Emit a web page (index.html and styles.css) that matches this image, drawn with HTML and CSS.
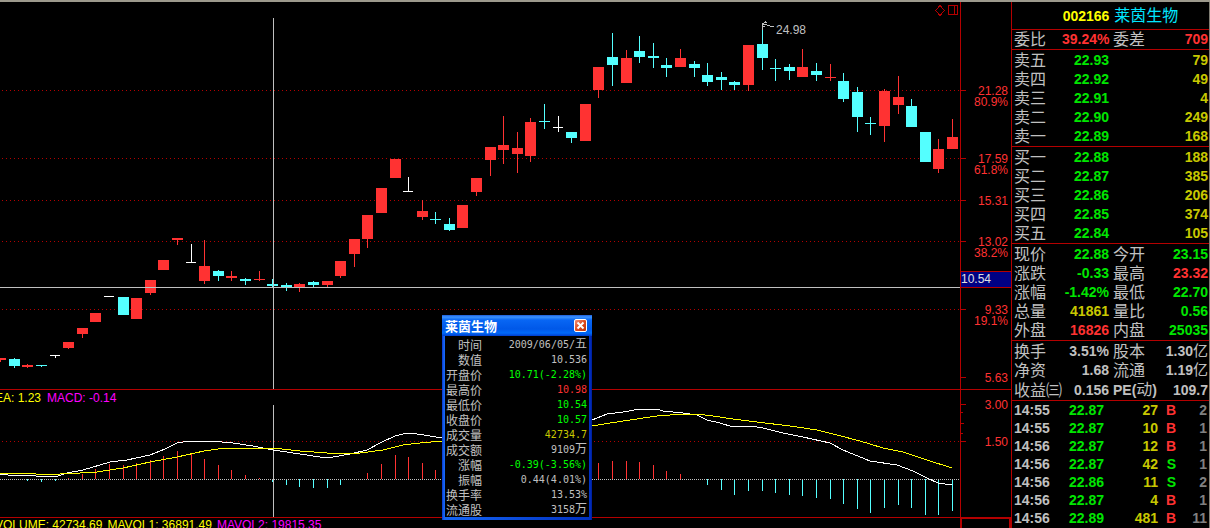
FILE: index.html
```html
<!DOCTYPE html>
<html lang="zh-CN">
<head>
<meta charset="utf-8">
<title>莱茵生物 002166</title>
<link rel="stylesheet" href="styles.css">
</head>
<body>
<main class="terminal">
  <div class="charts">
    <section class="pane">
      <div class="plot">
        <svg class="price-plot" id="price" viewBox="0 2 960 387" preserveAspectRatio="none" shape-rendering="crispEdges">
          <path class="grid" d="M2 90.5H960M2 158.5H960M2 200.5H960M2 241.5H960M2 309.5H960"/>
          <g id="candles"></g>
          <path class="cross" d="M273.5 18V389M0 287.5H960"/>
          <path class="pointer" d="M762.5 30V23.5M762 23.5h2M764 22.5h3M765 21.5h1M763 24.5h4M767 25.5h3M770 26.5h4M763 26.5h2"/>
        </svg>
        <span class="peak">24.98</span>
        <svg class="tools" viewBox="0 0 24 12" shape-rendering="crispEdges">
          <path d="M5 .5L9.5 5.5L5 10.5L.5 5.5Z"/>
          <path d="M13.5 .5H22.5V9.5H13.5ZM19.5 .5V9.5"/>
        </svg>
      </div>
      <svg class="axis price-axis" viewBox="961 2 50 387">
        <path class="tick" d="M961 90.5h5M961 158.5h5M961 200.5h5M961 241.5h5M961 309.5h5M961 377.5h5"/>
        <text x="1008" y="95">21.28</text><text x="1008" y="106">80.9%</text>
        <text x="1008" y="163">17.59</text><text x="1008" y="174">61.8%</text>
        <text x="1008" y="205">15.31</text>
        <text x="1008" y="246">13.02</text><text x="1008" y="257">38.2%</text>
        <text x="1008" y="314">9.33</text><text x="1008" y="325">19.1%</text>
        <text x="1008" y="382">5.63</text>
        <rect class="cursor-box" x="960.5" y="271.5" width="51" height="16"/>
        <text class="cursor-text" x="961" y="283">10.54</text>
      </svg>
    </section>
    <section class="pane">
      <div class="plot">
        <svg class="macd-plot" viewBox="0 390 960 127" preserveAspectRatio="none" shape-rendering="crispEdges">
          <path class="grid" d="M2 441.5H960"/>
          <g id="bars"></g>
          <path class="zero" d="M0 479.5H960"/>
          <path class="cross" d="M273.5 405V517"/>
          <polyline class="dif" points="0,474 8,475 35,475 36,476 58,476 67,473 83,470 110,462 127,460 150,455 165,449 177,443 190,441 210,441 233,443 253,446 273,450 300,454 320,457 333,457 350,454 367,450 380,443 395,436 407,433 417,434 430,436 442,438 500,446 550,438 592,420 607,414 623,412 640,409 657,409 663,411 683,413 697,415 707,420 720,423 733,427 750,426 763,428 783,433 803,437 830,443 843,450 870,461 897,465 913,471 927,478 938,483 952,485"/>
          <polyline class="dea" points="0,473 34,473 36,474 60,474 80,473 97,472 123,468 150,462 177,457 204,451 225,448 260,448 273,448 300,451 327,453 347,453 360,453 383,450 403,445 420,443 442,441 500,442 550,438 592,426 610,423 630,420 657,416 683,414 697,414 713,416 733,419 757,422 790,426 817,430 833,434 860,441 883,448 903,452 927,460 952,468"/>
        </svg>
        <p class="legend"><span class="yellow">EA: 1.23</span><span class="magenta">MACD: -0.14</span></p>
      </div>
      <svg class="axis macd-axis" viewBox="961 390 50 127">
        <path class="tick" d="M961 404.5h5M961 412.5h2M961 423.5h3M961 433.5h2M961 441.5h5"/>
        <text x="1008" y="409">3.00</text><text x="1008" y="446">1.50</text>
      </svg>
    </section>
    <section class="pane volume">
      <p class="legend-row"><span class="yellow">VOLUME: 42734.69</span><span class="yellow">MAVOL1: 36891.49</span><span class="magenta">MAVOL2: 19815.35</span></p>
      <div class="volume-axis"></div>
    </section>

    <section class="popup" role="dialog" aria-labelledby="popup-title">
      <header class="popup-bar">
        <h2 id="popup-title">莱茵生物</h2>
        <button class="close" type="button" aria-label="关闭"><svg viewBox="0 0 9 9"><path d="M1.5 1.5L7.5 7.5M7.5 1.5L1.5 7.5"/></svg></button>
      </header>
      <div class="popup-body">
        <table class="detail">
          <tr><th>时间</th><td>2009/06/05/<span class="han">五</span></td></tr>
          <tr><th>数值</th><td>10.536</td></tr>
          <tr><th>开盘价</th><td class="lime">10.71(-2.28%)</td></tr>
          <tr><th>最高价</th><td class="red">10.98</td></tr>
          <tr><th>最低价</th><td class="lime">10.54</td></tr>
          <tr><th>收盘价</th><td class="lime">10.57</td></tr>
          <tr><th>成交量</th><td class="gold">42734.7</td></tr>
          <tr><th>成交额</th><td>9109<span class="han">万</span></td></tr>
          <tr><th>涨幅</th><td class="lime">-0.39(-3.56%)</td></tr>
          <tr><th>振幅</th><td>0.44(4.01%)</td></tr>
          <tr><th>换手率</th><td>13.53%</td></tr>
          <tr><th>流通股</th><td>3158<span class="han">万</span></td></tr>
        </table>
      </div>
    </section>
  </div>

  <aside class="quote">
    <h1 class="stock"><span class="code">002166</span><span class="name">莱茵生物</span></h1>
    <table class="figures ratio">
      <tr><th>委比</th><td class="red">39.24%</td><th>委差</th><td class="red">709</td></tr>
    </table>
    <table class="figures">
      <tr><th>卖五</th><td class="green">22.93</td><th></th><td class="gold">79</td></tr>
      <tr><th>卖四</th><td class="green">22.92</td><th></th><td class="gold">49</td></tr>
      <tr><th>卖三</th><td class="green">22.91</td><th></th><td class="gold">4</td></tr>
      <tr><th>卖二</th><td class="green">22.90</td><th></th><td class="gold">249</td></tr>
      <tr><th>卖一</th><td class="green">22.89</td><th></th><td class="gold">168</td></tr>
    </table>
    <table class="figures">
      <tr><th>买一</th><td class="green">22.88</td><th></th><td class="gold">188</td></tr>
      <tr><th>买二</th><td class="green">22.87</td><th></th><td class="gold">385</td></tr>
      <tr><th>买三</th><td class="green">22.86</td><th></th><td class="gold">206</td></tr>
      <tr><th>买四</th><td class="green">22.85</td><th></th><td class="gold">374</td></tr>
      <tr><th>买五</th><td class="green">22.84</td><th></th><td class="gold">105</td></tr>
    </table>
    <table class="figures">
      <tr><th>现价</th><td class="green">22.88</td><th>今开</th><td class="green">23.15</td></tr>
      <tr><th>涨跌</th><td class="green">-0.33</td><th>最高</th><td class="red">23.32</td></tr>
      <tr><th>涨幅</th><td class="green">-1.42%</td><th>最低</th><td class="green">22.70</td></tr>
      <tr><th>总量</th><td class="gold">41861</td><th>量比</th><td class="green">0.56</td></tr>
      <tr><th>外盘</th><td class="red">16826</td><th>内盘</th><td class="green">25035</td></tr>
    </table>
    <table class="figures">
      <tr><th>换手</th><td>3.51%</td><th>股本</th><td>1.30<span class="unit">亿</span></td></tr>
      <tr><th>净资</th><td>1.68</td><th>流通</th><td>1.19<span class="unit">亿</span></td></tr>
      <tr><th>收益㈢</th><td>0.156</td><th><span class="pe">PE(</span>动<span class="pe">)</span></th><td>109.7</td></tr>
    </table>
    <table class="trades">
      <tr><td>14:55</td><td class="green">22.87</td><td class="gold">27</td><td class="red">B</td><td>2</td></tr>
      <tr><td>14:55</td><td class="green">22.87</td><td class="gold">10</td><td class="red">B</td><td>1</td></tr>
      <tr><td>14:56</td><td class="green">22.87</td><td class="gold">12</td><td class="red">B</td><td>1</td></tr>
      <tr><td>14:56</td><td class="green">22.87</td><td class="gold">42</td><td class="green">S</td><td>1</td></tr>
      <tr><td>14:56</td><td class="green">22.86</td><td class="gold">11</td><td class="green">S</td><td>2</td></tr>
      <tr><td>14:56</td><td class="green">22.87</td><td class="gold">4</td><td class="red">B</td><td>1</td></tr>
      <tr><td>14:56</td><td class="green">22.89</td><td class="gold">481</td><td class="red">B</td><td>11</td></tr>
    </table>
  </aside>
</main>
<script src="chart.js"></script>
</body>
</html>
```
FILE: styles.css
```css
* { box-sizing: border-box; }

body {
  margin: 0;
  background: #000;
  color: #c0c0c0;
  font: 12px/14px "Liberation Sans", "Noto Sans CJK SC", sans-serif;
}

h1, h2, p { margin: 0; }
table { border-collapse: collapse; border-spacing: 0; }
th, td { padding: 0; font-weight: inherit; white-space: nowrap; }
svg { display: block; }

.red { color: #ff3232; }
.green { color: #00e600; }
.lime { color: #00ff00; }
.gold { color: #c8c800; }
.yellow { color: #ffff00; }
.magenta { color: #ff00ff; }

.terminal {
  display: flex;
  height: 100vh;
  overflow: hidden;
  border-top: 2px solid #9c998c;
}

/* Charts */
.charts {
  position: relative;
  display: flex;
  flex: 1;
  flex-direction: column;
  min-width: 0;
}
.pane { display: flex; border-bottom: 1px solid #b40000; }
.plot { position: relative; flex: 1; min-width: 0; }
.plot > svg:first-child { width: 100%; }
.price-plot, .price-axis { height: 387px; }
.macd-plot, .macd-axis { height: 127px; }
.axis {
  flex: none;
  width: 51px;
  border-left: 1px solid #b40000;
}
.axis text { fill: #ff3232; text-anchor: end; }
.tick { fill: none; stroke: #b40000; shape-rendering: crispEdges; }
.axis .cursor-text { fill: #e0e0e0; text-anchor: start; }
.cursor-box { fill: #000084; stroke: #b40000; shape-rendering: crispEdges; }

.grid { fill: none; stroke: #b40000; stroke-dasharray: 1 3; }
.zero { fill: none; stroke: #c0c0c0; stroke-dasharray: 1 1; }
.cross, .pointer { fill: none; stroke: #c0c0c0; }
.dif, .dea { fill: none; stroke: #fff; }
.dea { stroke: #ffff00; }
.up { fill: #ff3232; }
.down { fill: #54ffff; }
.flat { fill: #fff; }

.peak { position: absolute; top: 21px; right: 154px; }
.tools {
  position: absolute;
  top: 3px;
  right: 1px;
  width: 24px;
  height: 12px;
  fill: none;
  stroke: #b40000;
}
.legend { position: absolute; top: 1px; left: -5px; display: flex; gap: 6px; }

.volume { flex: 1; border-bottom: 0; min-height: 0; overflow: hidden; }
.legend-row {
  display: flex;
  flex: 1;
  gap: 5px;
  margin-left: -5px;
}
.volume-axis {
  width: 51px;
  border: 2px solid #b40000;
  border-width: 1px 2px 0;
}

/* Detail window */
.popup {
  position: absolute;
  top: 313px;
  left: 442px;
  width: 150px;
  padding: 0 3px 3px;
  background: linear-gradient(90deg, #0a34c8, #1666f4 2px, #1666f4 3px, #0030c0 148px, #001c98);
}
.popup-bar {
  display: flex;
  align-items: center;
  justify-content: space-between;
  height: 21px;
  margin: 0 -3px;
  padding: 0 5px 0 3px;
  background: linear-gradient(#1c5cd8, #3c94ff 2px, #0866f4 5px, #0058e8 14px, #006af8 18px, #003ccc);
}
.popup-bar h2 {
  color: #fff;
  font: bold 13px/20px "Noto Sans CJK SC", sans-serif;
}
.close {
  width: 13px;
  height: 13px;
  padding: 1px;
  border: 1px solid #fff;
  border-radius: 2px;
  background: linear-gradient(135deg, #f09078, #e04c20 50%, #c03408);
}
.close svg { width: 9px; height: 9px; fill: none; stroke: #fff; stroke-width: 2; }
.popup-body { padding-top: 1px; background: #000; }
.detail { width: 100%; }
.detail tr { height: 15px; }
.detail th {
  width: 37px;
  text-align: right;
  font: 12px/15px "Noto Sans CJK SC", sans-serif;
}
.detail td {
  padding-right: 2px;
  text-align: right;
  font: 10px/15px "DejaVu Sans Mono", "Noto Sans CJK SC", monospace;
}
.detail .han { font: 12px/12px "Noto Sans CJK SC", sans-serif; }

/* Quote panel */
.quote {
  flex: none;
  width: 199px;
  border-right: 1px solid #807e74;
  border-left: 1px solid #b40000;
  font-size: 14px;
  font-weight: bold;
}
.stock {
  display: flex;
  align-items: center;
  justify-content: center;
  gap: 5px;
  height: 27px;
  padding-left: 20px;
  font-size: 14px;
}
.code { color: #ffff00; }
.name { color: #00e6ff; font-size: 16px; font-weight: 400; }
.figures {
  width: 100%;
  table-layout: fixed;
  border-top: 1px solid #b40000;
  border-collapse: separate;
  padding: 1px 1px 0 2px;
}
.ratio { padding-top: 0; }
.figures tr { height: 19px; }
.figures th {
  width: 48px;
  text-align: left;
  font-size: 16px;
  font-weight: 400;
  line-height: 19px;
}
.figures th:nth-child(3) { padding-left: 1px; }
.figures td { text-align: right; line-height: 19px; }
.figures td:nth-child(2) { width: 50px; padding-right: 3px; }
.pe { font-size: 14px; font-weight: bold; }
.unit { font-size: 15px; font-weight: 400; line-height: 15px; }
.trades {
  width: 100%;
  table-layout: fixed;
  border-top: 1px solid #b40000;
  border-collapse: separate;
  padding: 0 2px;
}
.trades td { height: 18px; text-align: right; line-height: 18px; }
.trades td:nth-child(1) { width: 40px; text-align: left; }
.trades td:nth-child(2) { width: 50px; }
.trades td:nth-child(3) { width: 54px; }
.trades td:nth-child(4) { width: 18px; }
.trades td:nth-child(5) { color: #808080; }
```
FILE: chart.js
```js
// Candles: [left, body top, body bottom, wick top, wick bottom, kind]
const candles = [
  [-5,358,360,358,362,"up"],[9,359,366,358,368,"down"],[22,365,367,364,368,"up"],[36,365,366,365,367,"down"],
  [50,355,356,355,358,"flat"],[63,342,348,342,349,"up"],[77,328,334,328,338,"up"],[90,313,322,313,322,"up"],
  [104,296,297,296,297,"flat"],[118,297,315,297,315,"down"],[131,298,319,298,319,"up"],[145,280,293,280,295,"up"],
  [158,260,270,260,270,"up"],[172,238,240,238,245,"up"],[186,262,263,244,263,"flat"],[199,266,281,240,284,"up"],
  [213,271,276,270,281,"down"],[226,276,278,271,281,"up"],[240,279,281,278,285,"down"],[254,279,280,271,281,"up"],
  [267,284,286,279,288,"down"],[281,285,287,283,291,"down"],[294,284,287,283,292,"up"],[308,282,285,281,287,"down"],
  [322,281,285,281,287,"up"],[335,261,276,261,278,"up"],[349,239,254,239,267,"up"],[362,215,239,215,248,"up"],
  [376,188,213,188,213,"up"],[390,159,178,159,178,"up"],[403,191,192,177,192,"flat"],[417,211,217,200,220,"up"],
  [430,219,220,212,224,"down"],[444,224,230,218,231,"down"],[457,205,228,205,228,"up"],[471,178,192,178,196,"up"],
  [485,147,160,147,176,"up"],[498,145,150,116,164,"up"],[512,148,154,132,173,"up"],[525,122,156,118,162,"up"],
  [539,121,122,104,129,"down"],[553,127,128,116,132,"flat"],[566,132,138,132,143,"down"],[580,104,141,104,141,"up"],
  [593,67,90,67,98,"up"],[607,57,65,33,86,"down"],[621,58,83,50,83,"up"],[634,51,57,36,63,"down"],
  [648,56,58,43,68,"down"],[661,65,68,58,77,"down"],[675,58,67,49,67,"up"],[689,64,68,61,77,"down"],
  [702,75,82,63,86,"down"],[716,77,80,72,90,"down"],[729,82,85,81,90,"down"],[743,45,85,45,91,"up"],
  [757,44,58,25,70,"down"],[770,68,69,59,81,"down"],[784,67,71,64,80,"down"],[797,67,77,49,77,"up"],
  [811,71,75,63,81,"down"],[825,77,78,64,81,"up"],[838,81,99,73,102,"down"],[852,92,117,87,132,"down"],
  [865,123,124,117,135,"down"],[879,91,126,89,142,"up"],[893,97,105,76,114,"up"],[906,106,127,99,127,"down"],
  [920,132,162,132,162,"down"],[933,149,169,139,173,"up"],[947,137,149,119,149,"up"]
];

// MACD histogram: [x, end]; ends above the zero line are positive
const zero = 479;
const bars = [
  [27,481],[41,482],[55,481],[68,478],[82,474],[95,469],[109,464],[123,465],[136,463],[150,460],[163,456],[177,451],
  [191,454],[204,459],[218,465],[231,470],[245,475],[259,478],[272,482],[286,485],[299,487],[313,488],[327,488],
  [340,485],[367,473],[381,464],[395,455],[408,457],[422,463],[435,470],[598,463],[612,461],[626,461],[639,462],
  [653,465],[666,471],[680,474],[707,485],[721,490],[734,495],[748,491],[762,491],[775,493],[789,495],[802,496],
  [816,498],[830,499],[843,504],[857,509],[870,513],[884,508],[898,505],[911,508],[925,515],[938,515],[952,511]
];

function rect(parent, x, y, width, height, kind) {
  const el = document.createElementNS("http://www.w3.org/2000/svg", "rect");
  for (const [key, value] of Object.entries({ x, y, width, height, class: kind })) {
    el.setAttribute(key, value);
  }
  parent.appendChild(el);
}

const candleLayer = document.getElementById("candles");
for (const [x, top, bottom, high, low, kind] of candles) {
  rect(candleLayer, x, top, kind === "flat" ? 10 : 11, bottom - top, kind);
  rect(candleLayer, x + 5, high, 1, low - high, kind);
}

const barLayer = document.getElementById("bars");
for (const [x, end] of bars) {
  rect(barLayer, x, Math.min(end, zero), 1, Math.abs(end - zero), end < zero ? "up" : "down");
}
```
